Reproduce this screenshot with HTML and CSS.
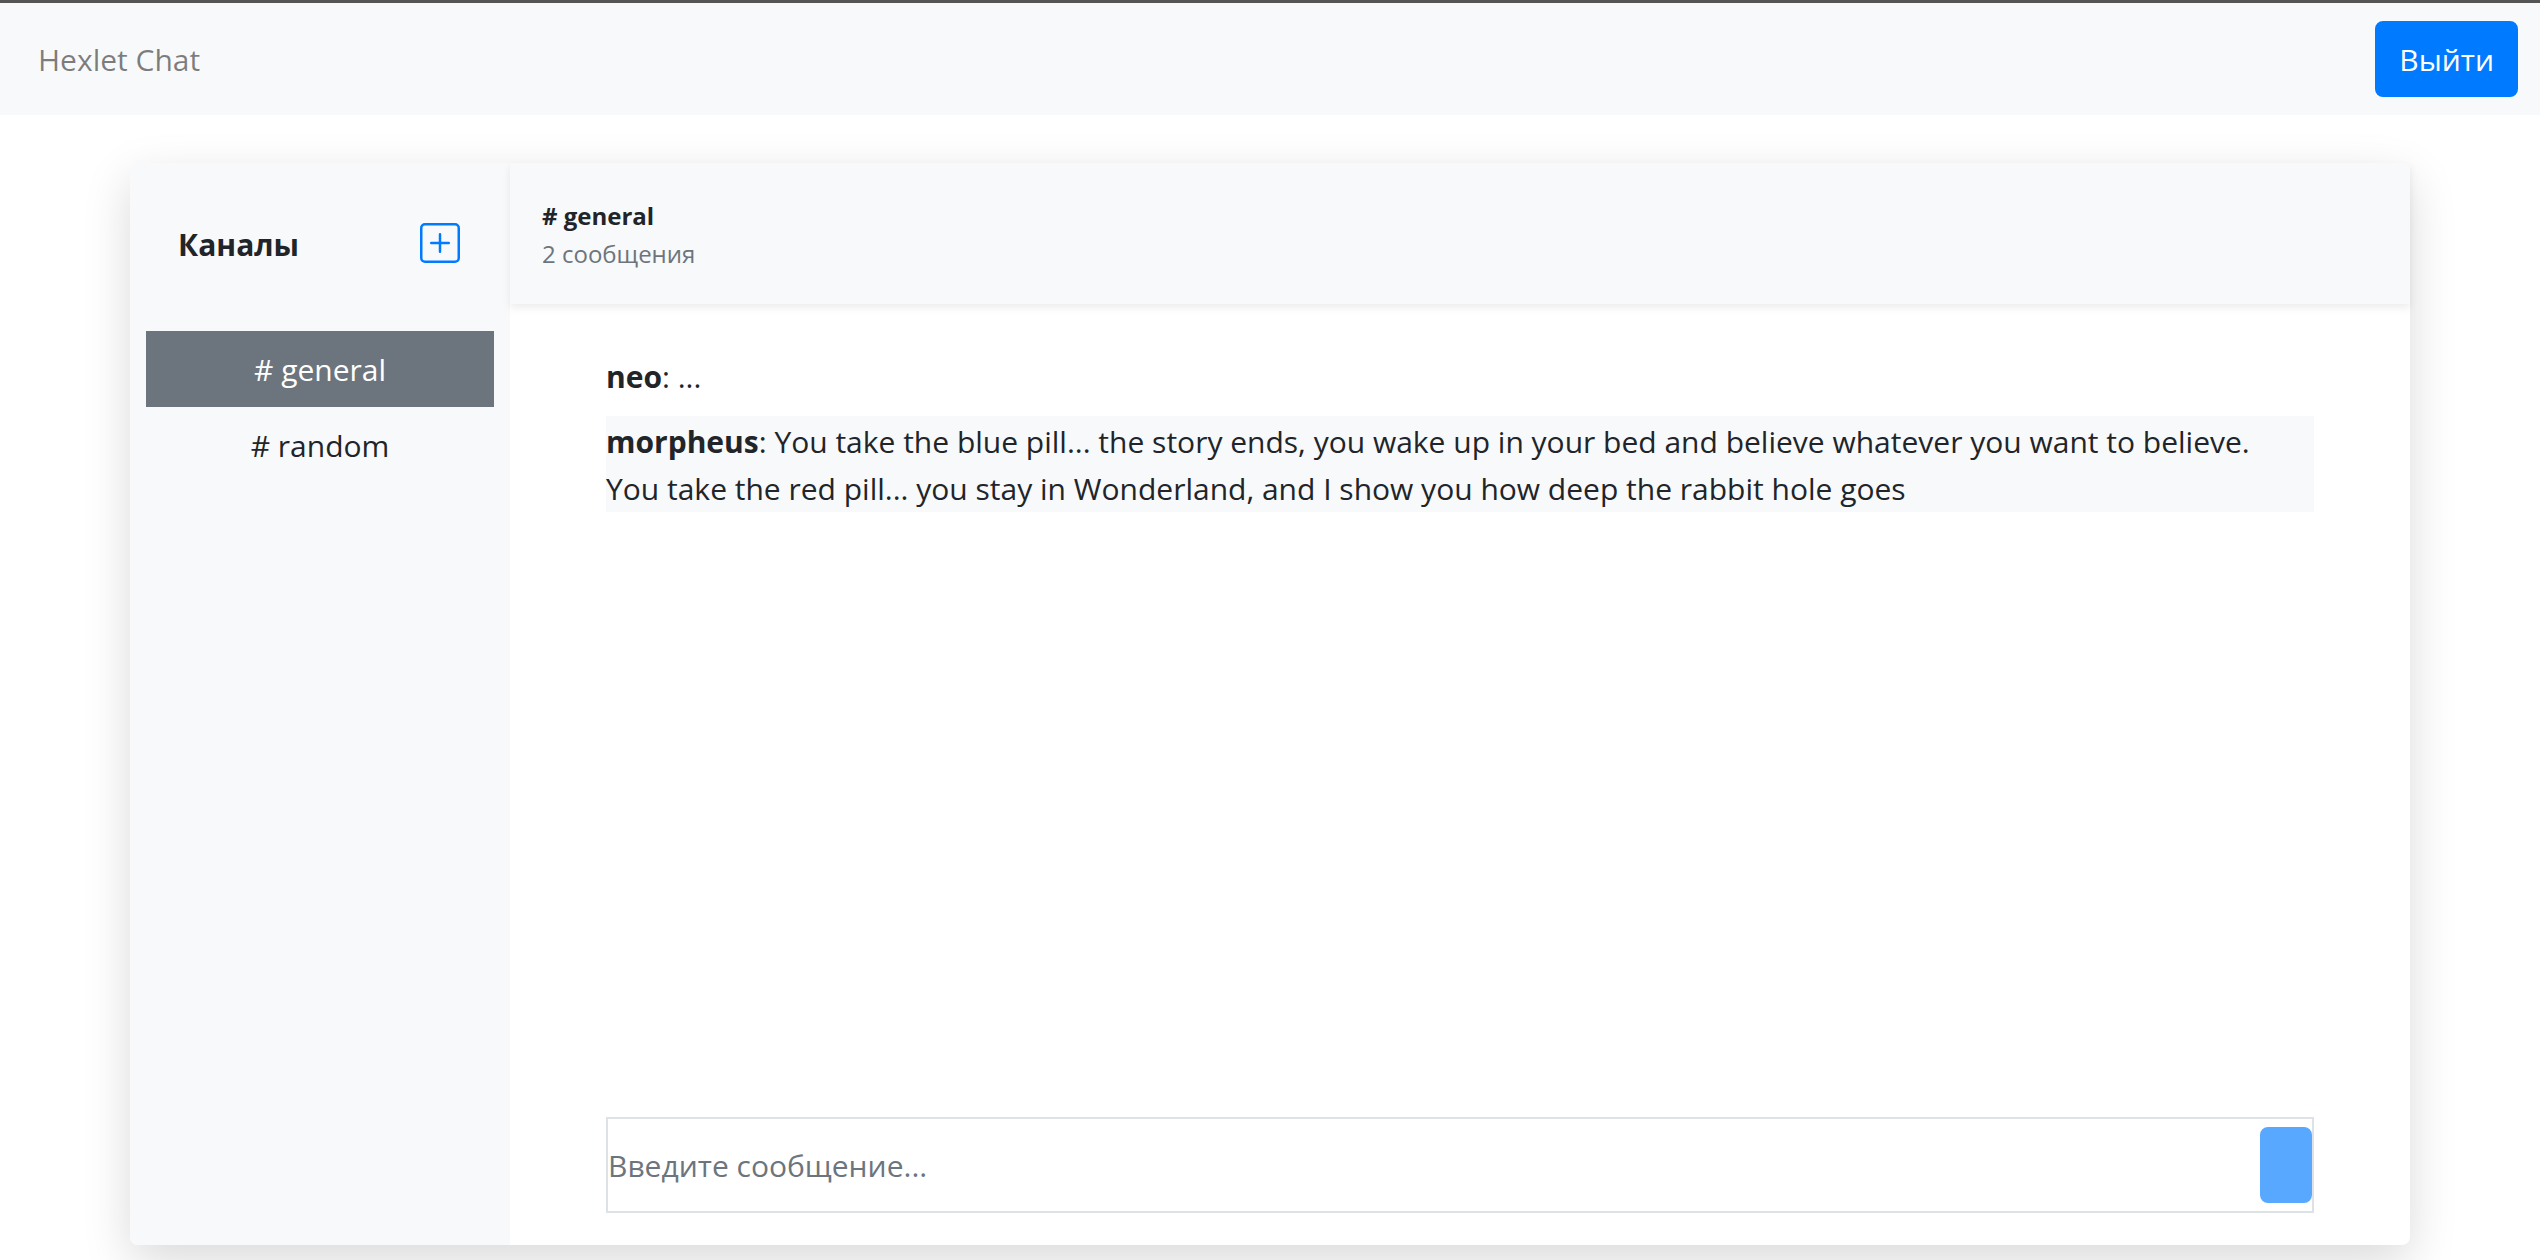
FILE: index.html
```html
<!DOCTYPE html>
<html lang="ru">
<head>
<meta charset="utf-8">
<title>Hexlet Chat</title>
<meta name="viewport" content="width=device-width, initial-scale=1">
<link rel="stylesheet" href="styles.css">
</head>
<body>
<header class="navbar">
  <a class="brand" href="#">Hexlet Chat</a>
  <button class="btn" type="button">Выйти</button>
</header>
<div class="chat">
  <aside class="sidebar">
    <div class="sidebar-head">
      <h2 class="sidebar-title">Каналы</h2>
      <button class="add-channel" type="button" aria-label="Добавить канал">
        <svg class="add-icon" viewBox="0 0 16 16" fill="currentColor" aria-hidden="true">
          <path d="M14 1a1 1 0 0 1 1 1v12a1 1 0 0 1-1 1H2a1 1 0 0 1-1-1V2a1 1 0 0 1 1-1h12zM2 0a2 2 0 0 0-2 2v12a2 2 0 0 0 2 2h12a2 2 0 0 0 2-2V2a2 2 0 0 0-2-2H2z"/>
          <path d="M8 4a.5.5 0 0 1 .5.5v3h3a.5.5 0 0 1 0 1h-3v3a.5.5 0 0 1-1 0v-3h-3a.5.5 0 0 1 0-1h3v-3A.5.5 0 0 1 8 4z"/>
        </svg>
      </button>
    </div>
    <ul class="channels">
      <li><button class="channel channel-active" type="button"># general</button></li>
      <li><button class="channel" type="button"># random</button></li>
    </ul>
  </aside>
  <main class="room">
    <div class="room-head">
      <h1 class="room-title"># general</h1>
      <p class="room-count">2 сообщения</p>
    </div>
    <div class="messages">
      <p class="message"><b>neo</b>: ...</p>
      <p class="message message-alt"><b>morpheus</b>: You take the blue pill... the story ends, you wake up in your bed and believe whatever you want to believe. You take the red pill... you stay in Wonderland, and I show you how deep the rabbit hole goes</p>
    </div>
    <form class="composer">
      <input class="composer-input" type="text" aria-label="Новое сообщение" placeholder="Введите сообщение...">
      <button class="btn composer-send" type="submit" aria-label="Отправить" disabled></button>
    </form>
  </main>
</div>
</body>
</html>
```
FILE: styles.css
```css
*, *::before, *::after { box-sizing: border-box; }

body {
  display: flex;
  flex-direction: column;
  height: 100vh;
  margin: 0;
  overflow: hidden;
  border-top: 3px solid #555;
  background: #fff;
  color: #212529;
  font: 30px/48px "Open Sans", "Noto Sans", sans-serif;
}

h1, h2, p, ul { margin: 0; padding: 0; }
ul { list-style: none; }
button, input { font: inherit; color: inherit; }
button { cursor: pointer; }

.navbar {
  display: flex;
  justify-content: space-between;
  align-items: center;
  padding: 18px 22px 18px 38px;
  background: #f8f9fa;
}

.brand {
  padding-top: 2px;
  color: rgba(0, 0, 0, .5);
  text-decoration: none;
}

.btn {
  padding: 13px 22px 11px;
  border: 2px solid #007bff;
  border-radius: 8px;
  background: #007bff;
  color: #fff;
}

.btn:disabled { opacity: .65; }

.chat {
  display: flex;
  flex: 1;
  width: 90%;
  max-width: 2280px;
  min-height: 0;
  margin: 48px auto 15px;
  border-radius: 8px;
  background: #fff;
  box-shadow: 0 16px 48px rgba(0, 0, 0, .15);
}

.sidebar {
  flex: 0 0 380px;
  padding: 48px 16px;
  border-radius: 8px 0 0 8px;
  background: #f8f9fa;
}

.sidebar-head {
  display: flex;
  justify-content: space-between;
  align-items: center;
  padding: 8px 34px 64px 32px;
}

.sidebar-title {
  padding-top: 4px;
  font-size: inherit;
  font-weight: 700;
  line-height: 44px;
}

.add-channel {
  display: flex;
  padding: 0;
  border: 0;
  background: none;
  color: #007bff;
}

.add-icon {
  width: 40px;
  height: 40px;
}

.channel {
  width: 100%;
  padding: 15px 24px 13px;
  border: 0;
  background: none;
  text-align: center;
}

.channel-active {
  background: #6c757d;
  color: #fff;
}

.room {
  display: flex;
  flex: 1;
  flex-direction: column;
  min-width: 0;
}

.room-head {
  padding: 34px 32px 31px;
  background: #f8f9fa;
  box-shadow: 0 4px 8px rgba(0, 0, 0, .075);
  font-size: 24px;
  line-height: 38px;
}

.room-title {
  font-size: inherit;
  font-weight: 700;
}

.room-count { color: #6c757d; }

.messages {
  flex: 1;
  min-height: 0;
  padding: 47px 96px 0;
  overflow: auto;
}

.message {
  margin-bottom: 16px;
  padding: 2px 16px 0 0;
  line-height: 47px;
}

.message-alt { background: #f8f9fa; }

.composer {
  display: flex;
  align-items: center;
  margin: 0 96px 32px;
  padding: 8px 0;
  border: 2px solid #dee2e6;
}

.composer-input {
  flex: 1;
  min-width: 0;
  padding: 15px 0 13px;
  border: 0;
  outline: 0;
  background: none;
}

.composer-input::placeholder {
  color: #6c757d;
  opacity: 1;
}

.composer-send {
  width: 52px;
  height: 76px;
}
```
